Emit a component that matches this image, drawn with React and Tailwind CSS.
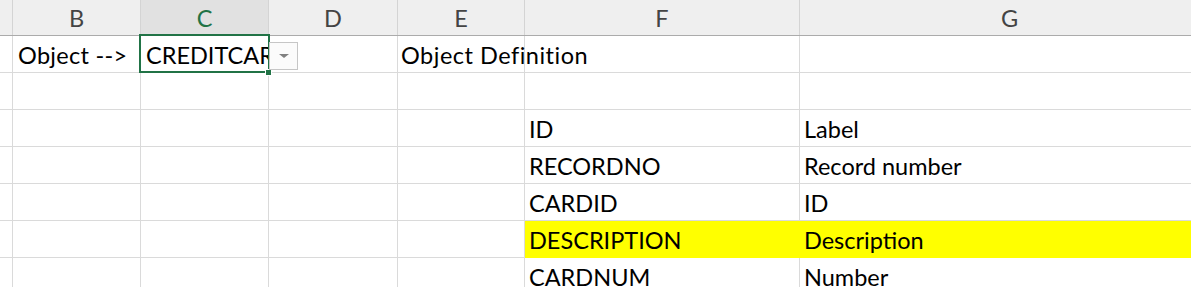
import React from 'react';

const cols = [
    { key: 'A', w: 'w-[13px]' },
    { key: 'B', w: 'w-[128px]' },
    { key: 'C', w: 'w-[128px]' },
    { key: 'D', w: 'w-[129px]' },
    { key: 'E', w: 'w-[127px]' },
    { key: 'F', w: 'w-[275px]' },
    { key: 'G', w: 'w-[420px]' },
];

// cell contents keyed by row, then column
const rows = [
    { B: 'Object -->', C: 'CREDITCARD', E: 'Object Definition' },
    {},
    { F: 'ID', G: 'Label' },
    { F: 'RECORDNO', G: 'Record number' },
    { F: 'CARDID', G: 'ID' },
    { F: 'DESCRIPTION', G: 'Description', fill: true },
    { F: 'CARDNUM', G: 'Number' },
];

const App = () => {
    return (
        <div className="w-[1191px] h-[287px] overflow-hidden bg-white font-['Lato','Liberation_Sans',sans-serif] text-black">
            {/* column headers */}
            <div className="flex h-[36px] bg-[#efefef] border-b border-[#ababab]">
                {cols.map((c) => (
                    <div
                        key={c.key}
                        className={`${c.w} shrink-0 border-r border-[#d4d4d4] flex items-center justify-center text-[23.5px] leading-[28px] ${c.key === 'C' ? 'bg-[#e1e1e1] text-[#217346]' : 'text-[#444444]'}`}
                    >
                        {c.key === 'A' ? '' : c.key}
                    </div>
                ))}
            </div>

            {rows.map((row, i) => (
                <div key={i} className="flex h-[37px]">
                    {cols.map((c) => {
                        const yellow = row.fill && (c.key === 'F' || c.key === 'G');
                        const isSel = i === 0 && c.key === 'C';
                        const spill = i === 0 && (c.key === 'E' || c.key === 'B');
                        return (
                            <div
                                key={c.key}
                                className={`${c.w} shrink-0 relative border-r border-b flex items-end pl-[4px] pb-[3px] text-[23.5px] leading-[28px] whitespace-nowrap ${yellow ? 'bg-[#ffff00] border-[#ffff00]' : 'border-[#dadada]'} ${isSel || spill ? 'overflow-visible z-10' : 'overflow-hidden'}`}
                            >
                                {isSel ? (
                                    <>
                                        <div className="w-full overflow-hidden pl-[1px]">{row[c.key]}</div>
                                        {/* selection frame */}
                                        <div className="absolute -left-[2px] -top-[2px] w-[131px] h-[39px] border-2 border-[#217346] pointer-events-none" />
                                        <div className="absolute -right-[4px] -bottom-[4px] w-[7px] h-[7px] bg-[#217346] border border-white" />
                                        {/* validation dropdown */}
                                        <div className="absolute left-[128px] top-[6px] w-[29px] h-[28px] border border-[#c6c6c6] bg-[#fbfbfb] flex items-center justify-center">
                                            <div className="w-0 h-0 border-l-[5px] border-r-[5px] border-t-[4px] border-l-transparent border-r-transparent border-t-[#808080]" />
                                        </div>
                                    </>
                                ) : (
                                    <span className={c.key === 'B' ? 'pl-[1px] tracking-[0.3px]' : c.key === 'E' ? '-ml-[1px] tracking-[0.5px]' : ''}>{row[c.key] || ''}</span>
                                )}
                            </div>
                        );
                    })}
                </div>
            ))}
        </div>
    );
};

export default App;
